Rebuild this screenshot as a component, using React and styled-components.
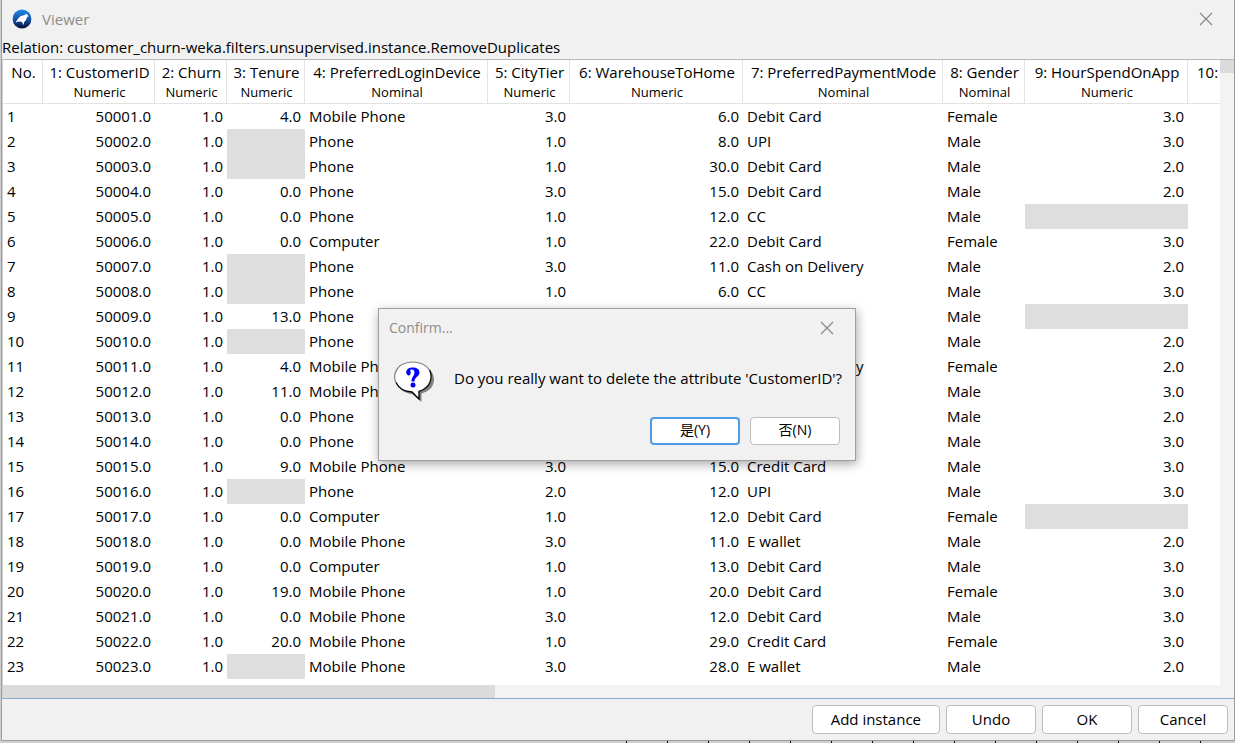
import React from "react";
import styled, { createGlobalStyle } from "styled-components";

const GlobalStyle = createGlobalStyle`
  *, *::before, *::after { box-sizing: border-box; }
  body { margin: 0; }
  body, button {
    font-family: "Open Sans", "Noto Sans CJK TC", sans-serif;
    font-size: 15px;
    line-height: 20px;
    color: #000;
  }
`;

const Desktop = styled.div`
  display: flex;
  min-height: 100vh;
  padding: 0 0 2px 1px;
  background:
    repeating-linear-gradient(90deg, #111 0 1px, transparent 1px 41px) 626px 100% / 100% 2px no-repeat,
    #cfcfcf;
`;

const Window = styled.main`
  position: relative;
  flex: 1;
  min-width: 0;
  display: flex;
  flex-direction: column;
  border: 1px solid #9c9c9c;
  border-top: 0;
  background: #f1f1f1;
`;

const TitleBar = styled.header`
  display: flex;
  align-items: center;
  gap: 10px;
  height: 37px;
  padding: 0 21px 0 10px;
`;

const Title = styled.h1`
  flex: 1;
  margin: 0;
  font-size: 15px;
  font-weight: 400;
  color: #8c8c8c;
`;

const CloseButton = styled.button`
  display: flex;
  padding: 0;
  border: 0;
  background: none;
`;

const Relation = styled.p`
  height: 22px;
  margin: 0;
  white-space: nowrap;
`;

const Viewport = styled.section`
  flex: 1;
  display: grid;
  grid-template-columns: minmax(0, 1fr) 14px;
  grid-template-rows: 1fr 13px;
  border-top: 1px solid #b9b9b9;
  border-bottom: 1px solid #86a9cf;
  border-left: 1px solid #d0d0d0;
  background: #f3f3f3;
`;

const TablePane = styled.div`
  overflow: hidden;
  background: #fff;
`;

const Thumb = styled.div`
  background: #dbdbdb;
  width: ${(p) => (p.$horizontal ? "492px" : "14px")};
  max-width: 100%;
  height: 13px;
`;

const Table = styled.table`
  width: 100%;
  table-layout: fixed;
  border-collapse: separate;
  border-spacing: 0;
`;

const Col = styled.col`
  width: ${(p) => (p.$width ? `${p.$width}px` : "auto")};
`;

const HeadCell = styled.th`
  height: 44px;
  padding: ${(p) => (p.$clipped ? "1px 0 0 9px" : "1px 0 0 2px")};
  border-right: ${(p) => (p.$clipped ? "0" : "1px solid #e3e3e3")};
  border-bottom: 1px solid #e3e3e3;
  font-weight: 400;
  text-align: ${(p) => (p.$clipped ? "left" : "center")};
  vertical-align: top;
  white-space: nowrap;
`;

const HeadName = styled.span`
  display: block;
  line-height: 22px;
`;

const HeadType = styled.span`
  display: block;
  font-size: 13px;
  line-height: 18px;
`;

const Cell = styled.td`
  height: 25px;
  padding: 0 4px 2px;
  text-align: ${(p) => (p.$numeric ? "right" : "left")};
  white-space: nowrap;
  background: ${(p) => (p.$missing ? "#dedede" : "transparent")};
`;

const Footer = styled.footer`
  display: flex;
  justify-content: flex-end;
  gap: 6px;
  padding: 6px 6px 6px 0;
`;

const Button = styled.button`
  min-width: 90px;
  height: ${(p) => (p.$small ? "28px" : "29px")};
  padding: 0 18px 2px;
  border: ${(p) => (p.$focused ? "2px solid #4f9ce6" : "1px solid #bdbdbd")};
  border-radius: 4px;
  background: #fff;
  font-size: ${(p) => (p.$small ? "14px" : "15px")};
  white-space: nowrap;
`;

const Overlay = styled.div`
  position: absolute;
  inset: 0;
  display: flex;
  align-items: center;
  justify-content: center;
  padding: 29px 2px 0 0;
`;

const Dialog = styled.div`
  width: 478px;
  border: 1px solid #a0a0a0;
  background: #f1f1f1;
  box-shadow: 1px 3px 10px rgba(0, 0, 0, 0.35);
`;

const DialogTitleBar = styled.div`
  display: flex;
  align-items: center;
  justify-content: space-between;
  height: 38px;
  padding: 0 21px 0 10px;
`;

const DialogTitle = styled.h2`
  margin: 0;
  font-size: 14px;
  font-weight: 400;
  color: #8c8c8c;
`;

const DialogBody = styled.div`
  display: flex;
  align-items: flex-start;
  gap: 19px;
  padding: 14px 0 0 15px;
`;

const Message = styled.p`
  margin: 0;
  padding-top: 7px;
  white-space: nowrap;
`;

const DialogButtons = styled.div`
  display: flex;
  justify-content: flex-end;
  gap: 10px;
  padding: 15px;
`;

const WekaIcon = () => (
  <svg width="20" height="20" viewBox="0 0 20 20" aria-hidden="true">
    <defs>
      <linearGradient id="orb" x1="0" y1="0" x2="0" y2="1">
        <stop offset="0" stopColor="#1b8ce8" />
        <stop offset="0.5" stopColor="#1453a6" />
        <stop offset="1" stopColor="#0b0b3c" />
      </linearGradient>
    </defs>
    <circle cx="10" cy="10" r="9.4" fill="url(#orb)" />
    <path d="M3.4 13.8 6 9.8 8.8 7.1 12 6.3 13.8 5 15.6 5.6 16.4 7.6 15 8.2 13.9 11.2 12 13.2 11.8 15.5 10.8 15.6 10.6 13.6 8.5 12.4 5.5 12.8Z" fill="#fff" />
  </svg>
);

const CloseIcon = () => (
  <svg width="14" height="14" viewBox="0 0 14 14" aria-hidden="true">
    <path d="M1 1 13 13M13 1 1 13" stroke="#858585" strokeWidth="1.1" fill="none" />
  </svg>
);

const QuestionIcon = () => (
  <svg width="41" height="41" viewBox="0 0 41 41" aria-hidden="true">
    <path d="M21 3C32 3 40 10 40 18.500C40 25.500 35 30.500 27.500 32.500V41L18 33C8 32 3 26 3 18.500C3 10 11 3 21 3Z" fill="#808080" />
    <path d="M18.500 1C29 1 37.500 7.500 37.500 16C37.500 23 32 28.500 25 30.300V38L18 31C7.500 30.500.5 24.500.5 16C.5 7.500 8 1 18.500 1Z" fill="#fff" />
    <path d="M2 21.500C.5 18.500.2 15 1.400 11.500C4 4.500 11 1 18.500 1C26 1 32 4 35.500 9" fill="none" stroke="#808080" strokeWidth="1.200" />
    <path d="M35.500 9C39.500 17 36 27 25 30.300V38L18 31C10 30.500 4.500 27 2 21.500" fill="none" stroke="#000" strokeWidth="1.300" />
    <path d="M14.500 14.500C10.500 13.500 11.500 6.500 18.500 6.500C23 6.500 25.500 8.500 25.500 11.500C25.500 15.500 20.500 16 20.500 20.500H17.500C17.500 16 20.500 14.500 20.500 11.500C20.500 9 19 8 17 8.500C15 9 17.500 10.500 16.500 13C16 14 15.500 14.500 14.500 14.500Z" fill="#00f" />
    <circle cx="19" cy="24" r="2.500" fill="#00f" />
  </svg>
);

const COLUMNS = [
  { name: "1: CustomerID", type: "Numeric", width: 112 },
  { name: "2: Churn", type: "Numeric", width: 72 },
  { name: "3: Tenure", type: "Numeric", width: 78 },
  { name: "4: PreferredLoginDevice", type: "Nominal", width: 183 },
  { name: "5: CityTier", type: "Numeric", width: 82 },
  { name: "6: WarehouseToHome", type: "Numeric", width: 173 },
  { name: "7: PreferredPaymentMode", type: "Nominal", width: 200 },
  { name: "8: Gender", type: "Nominal", width: 82 },
  { name: "9: HourSpendOnApp", type: "Numeric", width: 163 },
];

const ROWS = [
  ["4.0", "Mobile Phone", "3.0", "6.0", "Debit Card", "Female", "3.0"],
  [null, "Phone", "1.0", "8.0", "UPI", "Male", "3.0"],
  [null, "Phone", "1.0", "30.0", "Debit Card", "Male", "2.0"],
  ["0.0", "Phone", "3.0", "15.0", "Debit Card", "Male", "2.0"],
  ["0.0", "Phone", "1.0", "12.0", "CC", "Male", null],
  ["0.0", "Computer", "1.0", "22.0", "Debit Card", "Female", "3.0"],
  [null, "Phone", "3.0", "11.0", "Cash on Delivery", "Male", "2.0"],
  [null, "Phone", "1.0", "6.0", "CC", "Male", "3.0"],
  ["13.0", "Phone", "", "", "", "Male", null],
  [null, "Phone", "", "", "", "Male", "2.0"],
  ["4.0", "Mobile Phone", "", "", "Cash on Delivery", "Female", "2.0"],
  ["11.0", "Mobile Phone", "", "", "", "Male", "3.0"],
  ["0.0", "Phone", "", "", "", "Male", "2.0"],
  ["0.0", "Phone", "", "", "", "Male", "3.0"],
  ["9.0", "Mobile Phone", "3.0", "15.0", "Credit Card", "Male", "3.0"],
  [null, "Phone", "2.0", "12.0", "UPI", "Male", "3.0"],
  ["0.0", "Computer", "1.0", "12.0", "Debit Card", "Female", null],
  ["0.0", "Mobile Phone", "3.0", "11.0", "E wallet", "Male", "2.0"],
  ["0.0", "Computer", "1.0", "13.0", "Debit Card", "Male", "3.0"],
  ["19.0", "Mobile Phone", "1.0", "20.0", "Debit Card", "Female", "3.0"],
  ["0.0", "Mobile Phone", "3.0", "12.0", "Debit Card", "Male", "3.0"],
  ["20.0", "Mobile Phone", "1.0", "29.0", "Credit Card", "Female", "3.0"],
  [null, "Mobile Phone", "3.0", "28.0", "E wallet", "Male", "2.0"],
];

function InstanceTable() {
  return (
    <Table>
      <colgroup>
        <Col $width={40} />
        {COLUMNS.map((c) => (
          <Col key={c.name} $width={c.width} />
        ))}
        <Col />
      </colgroup>
      <thead>
        <tr>
          <HeadCell scope="col">
            <HeadName>No.</HeadName>
          </HeadCell>
          {COLUMNS.map((c) => (
            <HeadCell key={c.name} scope="col">
              <HeadName>{c.name}</HeadName>
              <HeadType>{c.type}</HeadType>
            </HeadCell>
          ))}
          <HeadCell scope="col" $clipped>
            <HeadName>10:</HeadName>
          </HeadCell>
        </tr>
      </thead>
      <tbody>
        {ROWS.map((row, i) => {
          const values = [`${50001 + i}.0`, "1.0", ...row];
          return (
            <tr key={i}>
              <Cell>{i + 1}</Cell>
              {values.map((value, c) => (
                <Cell key={c} $numeric={COLUMNS[c].type === "Numeric"} $missing={value === null}>
                  {value}
                </Cell>
              ))}
              <Cell />
            </tr>
          );
        })}
      </tbody>
    </Table>
  );
}

export default function App() {
  return (
    <>
      <GlobalStyle />
      <Desktop>
        <Window>
          <TitleBar>
            <WekaIcon />
            <Title>Viewer</Title>
            <CloseButton type="button" aria-label="Close viewer">
              <CloseIcon />
            </CloseButton>
          </TitleBar>
          <Relation>Relation: customer_churn-weka.filters.unsupervised.instance.RemoveDuplicates</Relation>
          <Viewport>
            <TablePane>
              <InstanceTable />
            </TablePane>
            <Thumb />
            <Thumb $horizontal />
          </Viewport>
          <Footer>
            <Button type="button">Add instance</Button>
            <Button type="button">Undo</Button>
            <Button type="button">OK</Button>
            <Button type="button">Cancel</Button>
          </Footer>
          <Overlay>
            <Dialog role="dialog" aria-modal="true" aria-labelledby="confirm-title">
              <DialogTitleBar>
                <DialogTitle id="confirm-title">Confirm...</DialogTitle>
                <CloseButton type="button" aria-label="Close dialog">
                  <CloseIcon />
                </CloseButton>
              </DialogTitleBar>
              <DialogBody>
                <QuestionIcon />
                <Message>Do you really want to delete the attribute 'CustomerID'?</Message>
              </DialogBody>
              <DialogButtons>
                <Button type="button" $small $focused>是(Y)</Button>
                <Button type="button" $small>否(N)</Button>
              </DialogButtons>
            </Dialog>
          </Overlay>
        </Window>
      </Desktop>
    </>
  );
}
